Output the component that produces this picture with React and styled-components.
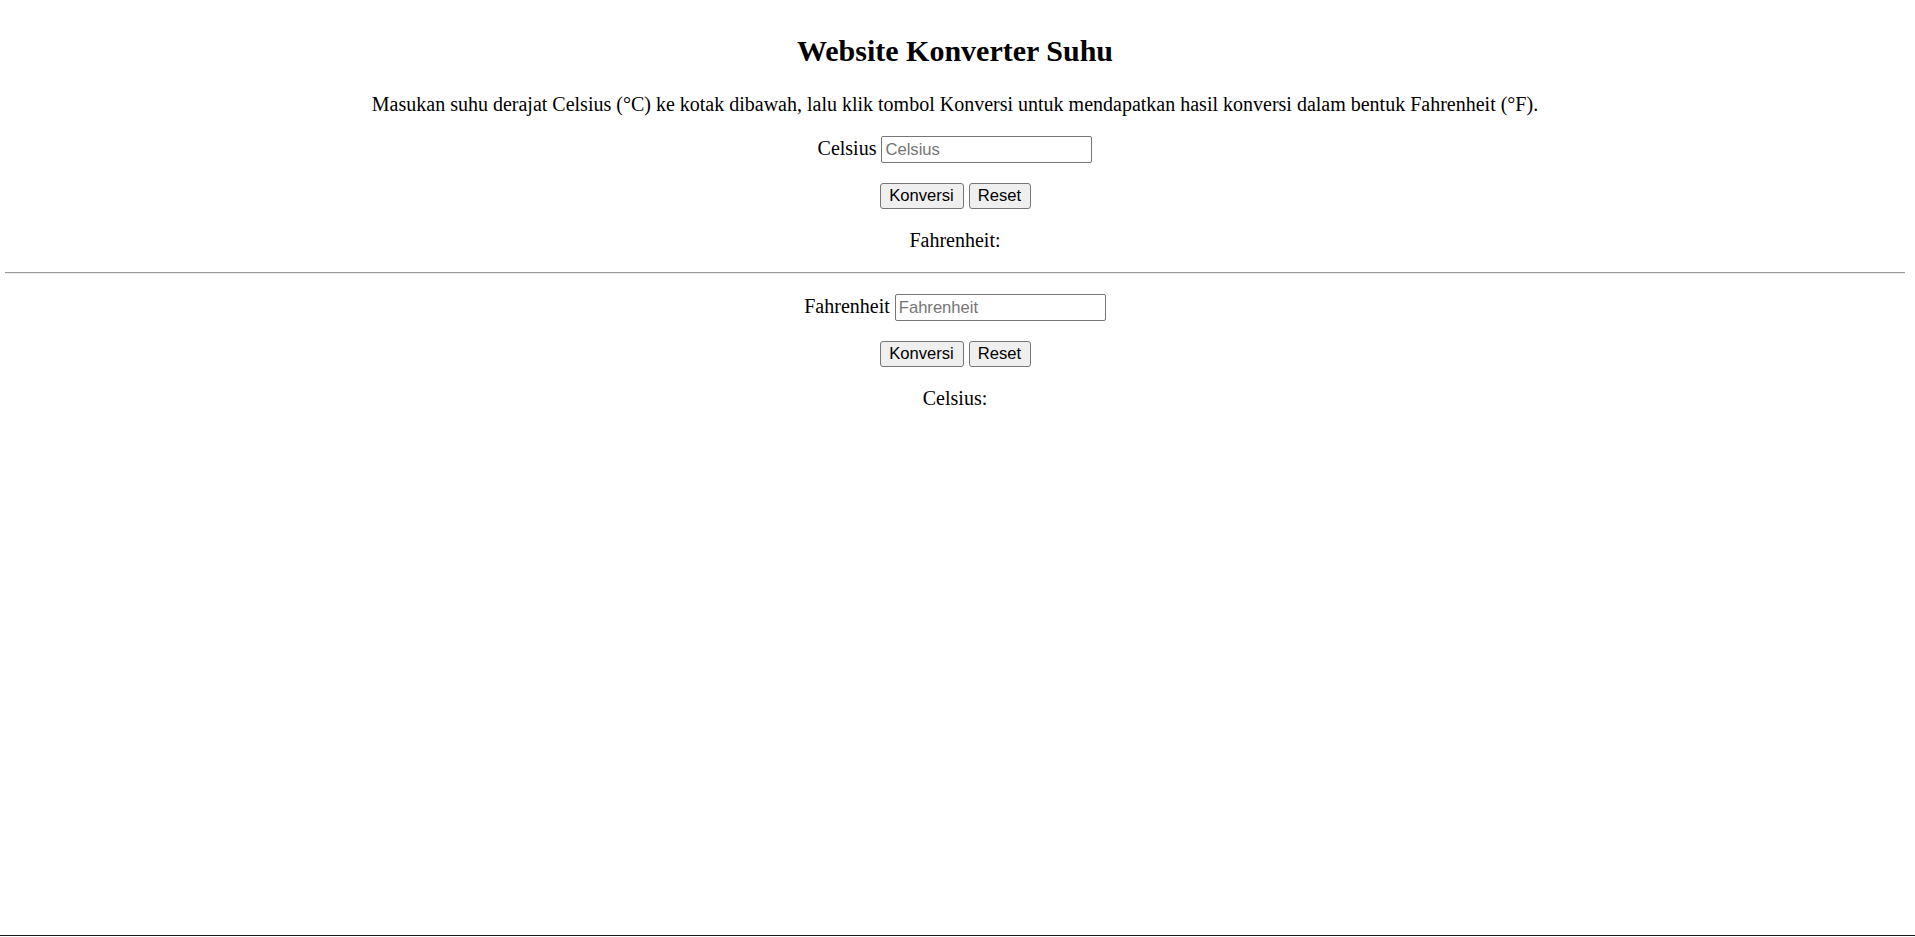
import React, { useState } from "react";
import styled, { createGlobalStyle } from "styled-components";

const GlobalStyle = createGlobalStyle`
  html, body { margin: 0; padding: 0; background: #ffffff; }
  body { font-family: "Liberation Serif", "Times New Roman", serif; color: #000; }
`;

const Page = styled.div`
  box-sizing: border-box;
  min-height: 936px;
  padding: 9px 10px 1px 5px;
  border-bottom: 1px solid #1a1a1a;
  text-align: center;
  font-size: 20px;
`;

const Title = styled.h2`
  font-size: 30px;
  font-weight: bold;
  margin: 25px 0;
`;

const Para = styled.p`
  margin: 20px 0;
  font-size: 20px;
`;

const Field = styled.input`
  box-sizing: border-box;
  width: 211px;
  height: 27px;
  padding: 1px 3px;
  border: 1px solid #767676;
  border-radius: 2px;
  font-family: "Liberation Sans", Arial, sans-serif;
  font-size: 16.6px;
  color: #000;
  &::placeholder { color: #757575; }
`;

const Button = styled.button`
  box-sizing: border-box;
  height: 26px;
  padding: 1px 7px;
  border: 1px solid #767676;
  border-radius: 3px;
  background: #efefef;
  font-family: "Liberation Sans", Arial, sans-serif;
  font-size: 16.6px;
  color: #000;
  width: ${(p) => p.$w}px;
`;

const Rule = styled.hr`
  margin: 10px 0;
  border: 0;
  border-top: 1px solid #9a9a9a;
  border-bottom: 1px solid #eeeeee;
  height: 0;
`;

function Converter({ from, to, convert }) {
  const [val, setVal] = useState("");
  const [res, setRes] = useState("");
  return (
    <>
      <Para>
        {from} <Field placeholder={from} value={val} onChange={(e) => setVal(e.target.value)} />
      </Para>
      <Para>
        <Button $w={84} onClick={() => setRes(val === "" ? "" : String(convert(parseFloat(val))))}>Konversi</Button>{" "}
        <Button $w={62} onClick={() => { setVal(""); setRes(""); }}>Reset</Button>
      </Para>
      <Para>{to}: {res}</Para>
    </>
  );
}

export default function App() {
  return (
    <>
      <GlobalStyle />
      <Page>
        <Title>Website Konverter Suhu</Title>
        <Para>
          Masukan suhu derajat Celsius (°C) ke kotak dibawah, lalu klik tombol Konversi untuk mendapatkan hasil konversi dalam bentuk Fahrenheit (°F).
        </Para>
        <Converter from="Celsius" to="Fahrenheit" convert={(c) => (c * 9) / 5 + 32} />
        <Rule />
        <Converter from="Fahrenheit" to="Celsius" convert={(f) => ((f - 32) * 5) / 9} />
      </Page>
    </>
  );
}
